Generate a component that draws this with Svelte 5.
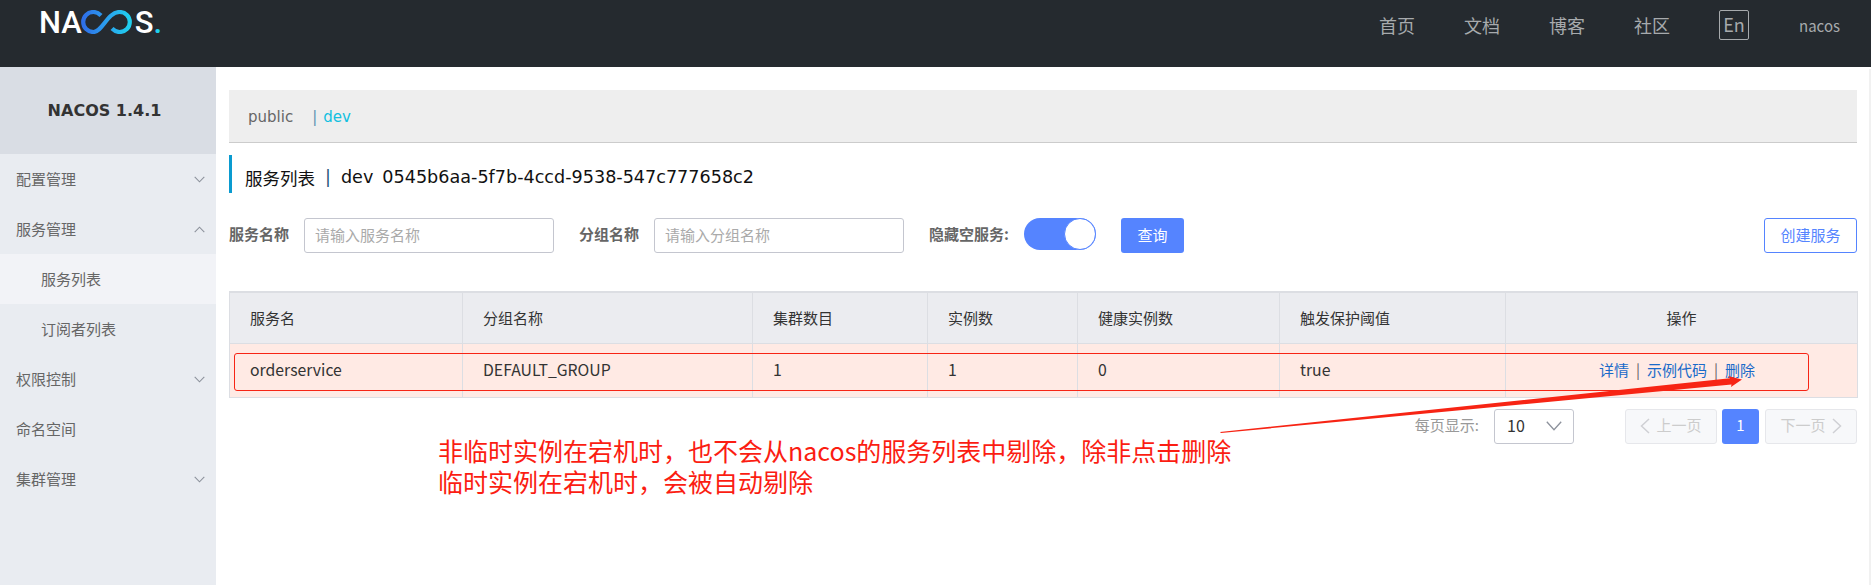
<script>
  const nav = ['首页', '文档', '博客', '社区'];
  const menu = [
    { label: '配置管理', arrow: 'down' },
    { label: '服务管理', arrow: 'up' },
    { label: '服务列表', sub: true, active: true },
    { label: '订阅者列表', sub: true },
    { label: '权限控制', arrow: 'down' },
    { label: '命名空间' },
    { label: '集群管理', arrow: 'down' }
  ];
  const columns = [
    { title: '服务名', width: 233 },
    { title: '分组名称', width: 290 },
    { title: '集群数目', width: 175 },
    { title: '实例数', width: 150 },
    { title: '健康实例数', width: 202 },
    { title: '触发保护阈值', width: 226 },
    { title: '操作', width: 352, center: true }
  ];
  const cells = ['orderservice', 'DEFAULT_GROUP', '1', '1', '0', 'true'];
</script>

<div class="page">
  <header class="topbar">
    <div class="logo">
      <span>NA</span>
      <svg width="54" height="24" viewBox="0 0 54 24" fill="none" aria-hidden="true">
        <defs>
          <linearGradient id="inf" x1="0" y1="0" x2="1" y2="0">
            <stop offset="0" stop-color="#2f6fe8" />
            <stop offset="0.55" stop-color="#2aa4ee" />
            <stop offset="1" stop-color="#1fd0ee" />
          </linearGradient>
        </defs>
        <path
          d="M20 5.500C17.500 3 15.500 2 12.500 2 6.500 2 2.200 6.500 2.200 12s4.300 10 10.300 10c9 0 14-20 26-20 6 0 10.300 4.500 10.300 10s-4.300 10-10.300 10c-3 0-5-1-7.500-3.500"
          stroke="url(#inf)"
          stroke-width="4.200"
          stroke-linecap="butt"
        />
      </svg>
      <span>S</span><span class="logo-dot">.</span>
    </div>
    <nav class="nav">
      {#each nav as item}
        <span>{item}</span>
      {/each}
      <span class="lang">En</span>
      <span class="user">nacos</span>
    </nav>
  </header>

  <div class="body">
    <aside class="sidebar">
      <div class="version">NACOS 1.4.1</div>
      {#each menu as item}
        <div class="menu-item" class:sub={item.sub} class:active={item.active}>
          <span class="menu-label">{item.label}</span>
          {#if item.arrow}
            <svg width="11" height="7" viewBox="0 0 11 7" fill="none" aria-hidden="true">
              {#if item.arrow === 'down'}
                <path d="M.7.8l4.800 5 4.800-5" stroke="#8d929c" stroke-width="1.100" />
              {:else}
                <path d="M.7 6.200l4.800-5 4.800 5" stroke="#8d929c" stroke-width="1.100" />
              {/if}
            </svg>
          {/if}
        </div>
      {/each}
    </aside>

    <main class="content">
      <div class="namespaces">
        <span class="ns">public</span>
        <span class="ns-sep">|</span>
        <span class="ns-current">dev</span>
      </div>

      <h1 class="title">
        <span class="title-cn">服务列表</span>
        <span class="title-sep">|</span>
        <span>dev</span>
        <span class="title-id">0545b6aa-5f7b-4ccd-9538-547c777658c2</span>
      </h1>

      <div class="filters">
        <label class="label" for="svc">服务名称</label>
        <input id="svc" class="input" placeholder="请输入服务名称" />
        <label class="label group-label" for="grp">分组名称</label>
        <input id="grp" class="input" placeholder="请输入分组名称" />
        <span class="label hide-label">隐藏空服务:</span>
        <span class="switch"><span class="knob"></span></span>
        <button class="btn primary">查询</button>
        <button class="btn outline">创建服务</button>
      </div>

      <table class="table">
        <colgroup>
          {#each columns as col}
            <col style="width: {col.width}px" />
          {/each}
        </colgroup>
        <thead>
          <tr>
            {#each columns as col}
              <th class:center={col.center}>{col.title}</th>
            {/each}
          </tr>
        </thead>
        <tbody>
          <tr>
            {#each cells as cell}
              <td>{cell}</td>
            {/each}
            <td class="center actions">
              <a href="#detail">详情</a><i>|</i><a href="#sample">示例代码</a><i>|</i><a href="#delete">删除</a>
            </td>
          </tr>
        </tbody>
      </table>

      <div class="pager">
        <span class="per-page">每页显示:</span>
        <div class="select">
          <span>10</span>
          <svg width="16" height="10" viewBox="0 0 16 10" fill="none" aria-hidden="true">
            <path d="M.8.8L8 8.800 15.200.8" stroke="#8d929c" stroke-width="1.300" />
          </svg>
        </div>
        <button class="page-btn prev">
          <svg width="10" height="16" viewBox="0 0 10 16" fill="none" aria-hidden="true">
            <path d="M9 1L1.500 8 9 15" stroke="#cfd0d4" stroke-width="1.500" />
          </svg>
          <span>上一页</span>
        </button>
        <button class="page-num">1</button>
        <button class="page-btn next">
          <span>下一页</span>
          <svg width="10" height="16" viewBox="0 0 10 16" fill="none" aria-hidden="true">
            <path d="M1 1l7.500 7L1 15" stroke="#cfd0d4" stroke-width="1.500" />
          </svg>
        </button>
      </div>
    </main>
    <div class="scroll-strip"></div>
  </div>

  <!-- red markup drawn on top of the screenshot -->
  <div class="mark-box"></div>
  <svg class="mark-arrow" width="540" height="70" viewBox="1210 370 540 70" aria-hidden="true">
    <polygon points="1220,432 1730,378.300 1728,376 1742,379.500 1731,387 1731.500,384.500 1221,433" fill="#f72414" />
  </svg>
  <div class="note">
    非临时实例在宕机时，也不会从nacos的服务列表中剔除，除非点击删除<br />
    临时实例在宕机时，会被自动剔除
  </div>
</div>

<style>
  :global(body) {
    margin: 0;
    background: #fff;
  }

  .page {
    position: relative;
    min-height: 585px;
    display: flex;
    flex-direction: column;
    font-family: "Noto Sans CJK SC", "Noto Sans", sans-serif;
    font-size: 15px;
    color: #333;
    overflow: hidden;
  }

  .topbar {
    height: 67px;
    flex: none;
    background: #252a2f;
    display: flex;
    justify-content: space-between;
    padding: 0 31px 0 39px;
    box-sizing: border-box;
  }

  .logo {
    height: 44px;
    display: flex;
    align-items: center;
    font-family: Roboto, sans-serif;
    font-size: 31px;
    font-weight: 500;
    color: #fff;
  }

  .logo svg {
    margin: 0 0 0 -1px;
  }

  .logo-dot {
    color: #1fd0ee;
  }

  .nav {
    display: flex;
    align-items: flex-start;
    gap: 49px;
    font-size: 18px;
    line-height: 26px;
    padding-top: 12px;
    color: #a7aaad;
  }

  .lang {
    margin: -2px 0 0;
    width: 30px;
    height: 30px;
    box-sizing: border-box;
    border: 1px solid #a7aaad;
    border-radius: 2px;
    text-align: center;
    font-size: 18px;
    line-height: 26px;
  }

  .user {
    margin-left: 1px;
    font-size: 15px;
    padding-top: 1px;
  }

  .body {
    flex: 1;
    display: flex;
  }

  .sidebar {
    width: 216px;
    flex: none;
    background: #e9ecf1;
    color: #666;
  }

  .version {
    height: 87px;
    box-sizing: border-box;
    padding-right: 7px;
    background: #d9dde4;
    display: flex;
    align-items: center;
    justify-content: center;
    font-family: "DejaVu Sans", sans-serif;
    font-size: 16px;
    font-weight: 700;
    color: #333;
  }

  .menu-item {
    height: 50px;
    display: flex;
    align-items: center;
    justify-content: space-between;
    padding: 0 11px 0 16px;
  }

  .menu-label {
    padding-bottom: 2px;
  }

  .menu-item.sub {
    padding-left: 41px;
  }

  .menu-item.active {
    background: #f2f3f7;
  }

  .content {
    flex: 1;
    min-width: 0;
    padding: 23px 12px 0 13px;
  }

  .namespaces {
    height: 53px;
    box-sizing: border-box;
    display: flex;
    align-items: center;
    padding: 2px 0 0 19px;
    background: #eee;
    border-bottom: 1px solid #ccc;
    font-family: "DejaVu Sans", sans-serif;
    font-size: 15px;
    color: #666;
  }

  .ns-sep {
    margin-left: 19px;
    color: #5d93b4;
  }

  .ns-current {
    margin-left: 6px;
    color: #12c0e0;
  }

  .title {
    margin: 12px 0 0;
    height: 38px;
    box-sizing: border-box;
    display: flex;
    align-items: center;
    padding: 6px 0 0 13px;
    border-left: 3px solid #0a9bd0;
    font-family: "DejaVu Sans", "Noto Sans CJK SC", sans-serif;
    font-size: 17.600px;
    font-weight: 400;
    color: #111;
  }

  .title-cn {
    font-family: "Noto Sans CJK SC", sans-serif;
    font-size: 17.500px;
  }

  .title-sep {
    margin: 0 10px;
    color: #24557a;
  }

  .title-id {
    margin-left: 9px;
  }

  .filters {
    margin-top: 25px;
    display: flex;
    align-items: flex-start;
  }

  .label {
    line-height: 31px;
    font-weight: 700;
    color: #666;
    white-space: nowrap;
  }

  .input {
    width: 250px;
    height: 35px;
    box-sizing: border-box;
    margin-left: 15px;
    padding: 0 10px 2px;
    border: 1px solid #c4c6cf;
    border-radius: 3px;
    outline: none;
    font: inherit;
    color: #333;
    background: #fff;
  }

  .input::placeholder {
    color: #aaa;
  }

  .group-label {
    margin-left: 25px;
  }

  .hide-label {
    margin-left: 25px;
  }

  .switch {
    width: 72px;
    height: 32px;
    margin-left: 15px;
    border-radius: 16px;
    background: #5584ff;
    display: flex;
    justify-content: flex-end;
  }

  .knob {
    width: 32px;
    height: 32px;
    box-sizing: border-box;
    border: 1px solid #5584ff;
    border-radius: 50%;
    background: #fff;
  }

  .btn {
    height: 35px;
    box-sizing: border-box;
    border-radius: 3px;
    font: inherit;
    padding: 0 0 2px;
  }

  .primary {
    width: 63px;
    margin-left: 25px;
    border: none;
    background: #5584ff;
    color: #fff;
  }

  .outline {
    width: 93px;
    margin-left: auto;
    border: 1px solid #5584ff;
    background: #fff;
    color: #5584ff;
  }

  .table {
    width: 1628px;
    margin-top: 38px;
    border-collapse: collapse;
    table-layout: fixed;
    border: 1px solid #dcdee3;
    border-top-width: 2px;
  }

  th,
  td {
    padding: 0 0 0 20px;
    border: 1px solid #dcdee3;
    text-align: left;
    font-weight: 400;
    color: #333;
  }

  th {
    height: 51px;
    box-sizing: border-box;
    background: #ebecf0;
  }

  td {
    height: 54px;
    box-sizing: border-box;
    padding-bottom: 1px;
    font-size: 15.800px;
    background: #ffeae4;
  }

  th.center,
  td.center {
    padding: 0;
    text-align: center;
  }

  td.actions {
    padding: 0 9px 1px 0;
    font-size: 15px;
  }

  .actions a {
    color: #1a6ac9;
    text-decoration: none;
  }

  .actions i {
    margin: 0 7px;
    font-style: normal;
    color: #666;
  }

  .pager {
    margin-top: 11px;
    display: flex;
    align-items: center;
    color: #999;
  }

  .per-page {
    margin-left: auto;
    padding-bottom: 4px;
  }

  .select {
    width: 80px;
    height: 35px;
    margin-left: 15px;
    box-sizing: border-box;
    padding: 0 11px 0 12px;
    display: flex;
    align-items: center;
    justify-content: space-between;
    border: 1px solid #c4c6cf;
    border-radius: 3px;
    color: #333;
    font-size: 16px;
  }

  .select span {
    padding-bottom: 3px;
  }

  .page-btn {
    width: 92px;
    height: 35px;
    box-sizing: border-box;
    padding: 0;
    display: flex;
    align-items: center;
    justify-content: center;
    gap: 6px;
    border: 1px solid #e6e7eb;
    border-radius: 3px;
    background: #f7f8fa;
    color: #ccc;
    font: inherit;
  }

  .page-btn span {
    padding-bottom: 4px;
  }

  .prev {
    margin-left: 51px;
  }

  .page-num {
    width: 37px;
    height: 35px;
    margin: 0 6px 0 5px;
    padding: 0 0 4px;
    border: none;
    border-radius: 3px;
    background: #5584ff;
    color: #fff;
    font: inherit;
  }

  .scroll-strip {
    width: 2px;
    flex: none;
    margin-top: 2px;
    background: #f1f1f1;
  }

  .mark-box {
    position: absolute;
    left: 234px;
    top: 353px;
    width: 1575px;
    height: 38px;
    box-sizing: border-box;
    border: 1.500px solid #f72414;
    border-radius: 3px;
  }

  .mark-arrow {
    position: absolute;
    left: 1210px;
    top: 370px;
  }

  .note {
    position: absolute;
    left: 438px;
    top: 435px;
    font-size: 25px;
    line-height: 31px;
    color: #fb1d12;
    white-space: nowrap;
  }
</style>
